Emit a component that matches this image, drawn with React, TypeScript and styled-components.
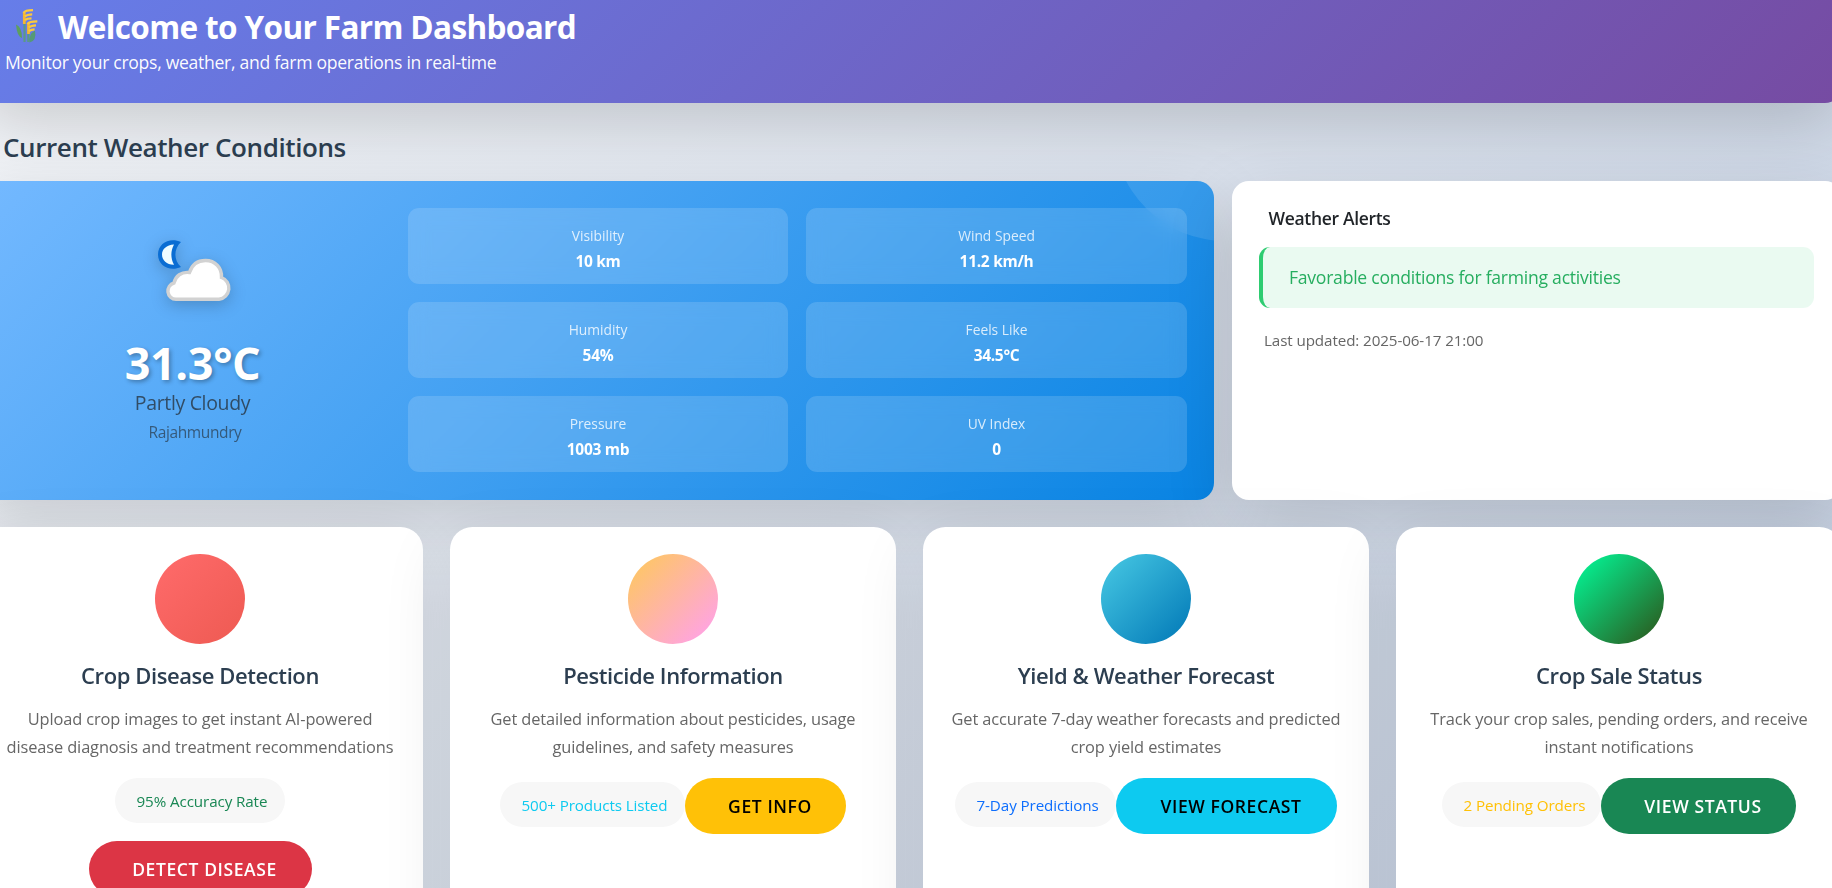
import React from 'react';
import styled, { createGlobalStyle } from 'styled-components';

const Global = createGlobalStyle`
  *{box-sizing:border-box;margin:0;padding:0}
  html,body{margin:0;height:888px;overflow:hidden}
  body{font-family:"Open Sans","Noto Sans",sans-serif;font-size:18px;background:linear-gradient(135deg,#f5f7fa 0%,#c3cfe2 100%)}
`;
const Page = styled.div`width:1832px;height:888px;overflow:hidden;`;
const Shell = styled.div`width:1865px;margin-left:-23px;display:flex;flex-direction:column;`;
const Header = styled.header`
  height:103px;padding:6px 28px 0;color:#fff;border-radius:0 0 17px 17px;
  background:linear-gradient(135deg,#667eea 0%,#764ba2 100%);
  box-shadow:0 22px 67px rgba(0,0,0,.17);
`;
const TitleRow = styled.div`display:flex;align-items:center;height:40px;svg{margin:0 20px 0 11px;flex:none}`;
const Title = styled.h1`font-size:31.5px;font-weight:700;line-height:39px;white-space:nowrap;letter-spacing:-.63px;`;
const Subtitle = styled.p`font-size:17.6px;line-height:33px;letter-spacing:-.3px;color:rgba(255,255,255,.97);`;
const SectionTitle = styled.h2`height:78px;padding:24px 26px 0;font-size:26px;font-weight:600;line-height:40px;color:#2c3e50;letter-spacing:-.4px;`;
const WeatherRow = styled.section`display:grid;grid-template-columns:1237px 610px;gap:18px;height:319px;`;
const WeatherCard = styled.article`
  position:relative;overflow:hidden;border-radius:17px;padding:27px;display:grid;grid-template-columns:377px 779px;gap:27px;
  background:linear-gradient(135deg,#74b9ff 0%,#0984e3 100%);color:#fff;
`;
const WeatherShadow = styled.div`border-radius:17px;box-shadow:0 22px 67px rgba(0,0,0,.15);display:grid;`;
const Glow = styled.div`position:absolute;width:225px;height:225px;border-radius:50%;right:-124px;top:-165px;background:rgba(255,255,255,.1);`;
const Now = styled.div`display:flex;flex-direction:column;align-items:center;padding-top:31px;text-align:center;svg{margin-left:3px;filter:drop-shadow(0 4px 8px rgba(0,0,0,.2))}`;
const Temp = styled.div`margin-top:33px;font-size:45px;line-height:54px;font-weight:700;letter-spacing:-.4px;text-shadow:2px 2px 4px rgba(0,0,0,.3);`;
const Condition = styled.div`margin-top:1px;font-size:19.5px;line-height:24px;letter-spacing:-.35px;color:#212529;opacity:.7;`;
const Place = styled.div`font-size:15.5px;line-height:24px;letter-spacing:-.38px;color:#212529;opacity:.6;margin:5px 0 0 5px;`;
const Details = styled.div`display:grid;grid-template-columns:380px 381px;grid-auto-rows:76px;gap:18px;`;
const Detail = styled.div`border-radius:11px;background:rgba(255,255,255,.15);backdrop-filter:blur(10px);display:flex;flex-direction:column;align-items:center;padding-top:16px;`;
const DetailLabel = styled.span`font-size:13.8px;line-height:24px;opacity:.8;`;
const DetailValue = styled.strong`font-size:15.5px;line-height:26px;font-weight:700;letter-spacing:-.3px;`;
const Alerts = styled.article`position:relative;background:#fff;border-radius:17px;padding:27px 28px 27px 27px;box-shadow:0 22px 67px rgba(0,0,0,.15);`;
const AlertsTitle = styled.h3`font-size:17.5px;font-weight:600;line-height:21px;letter-spacing:-.32px;color:#212529;padding-left:9.5px;`;
const Alert = styled.div`margin-top:18px;height:61px;border-left:4.5px solid #2ecc71;border-radius:11px;background:rgba(46,204,113,.1);color:#27ae60;padding-left:26px;font-size:17.6px;letter-spacing:-.26px;line-height:61px;`;
const Updated = styled.p`font-size:15.2px;line-height:24px;letter-spacing:-.1px;color:#666;margin:20px 0 0 5px;`;
const Features = styled.section`position:relative;display:grid;grid-template-columns:repeat(4,446px);gap:27px;margin-top:27px;`;
const Feature = styled.article`height:440px;background:#fff;border-radius:22.5px;padding:27px 20px;text-align:center;box-shadow:0 22px 67px rgba(0,0,0,.13);`;
const Disc = styled.div<{ $from: string; $to: string }>`width:90px;height:90px;border-radius:50%;margin:0 auto;background:linear-gradient(135deg,${p => p.$from},${p => p.$to});`;
const FeatureTitle = styled.h3`margin-top:16px;font-size:22px;line-height:30px;font-weight:600;letter-spacing:-.42px;color:#2c3e50;`;
const FeatureText = styled.p`margin-top:15px;font-size:16.4px;line-height:28px;letter-spacing:-.12px;color:#666;white-space:pre-line;`;
const Actions = styled.div<{ $stack?: boolean }>`margin-top:17px;display:flex;justify-content:center;align-items:${p => p.$stack ? 'center' : 'flex-start'};flex-direction:${p => p.$stack ? 'column' : 'row'};gap:${p => p.$stack ? '18px' : '0'};`;
const Pill = styled.span<{ $color: string; $w: number; $drop?: boolean }>`width:${p => p.$w}px;height:45px;border-radius:23px;background:#f7f7f7;color:${p => p.$color};font-size:15.2px;letter-spacing:-.1px;line-height:47px;text-align:left;padding-left:21.5px;margin-top:${p => p.$drop ? '4px' : '0'};white-space:nowrap;`;
const Button = styled.button<{ $bg: string; $fg: string; $w: number }>`width:${p => p.$w}px;height:56px;border:0;border-radius:28px;background:${p => p.$bg};color:${p => p.$fg};font:600 17.5px "Open Sans","Noto Sans",sans-serif;letter-spacing:.6px;white-space:nowrap;padding:0 0 1px 9px;`;

const Wheat = () => (
  <svg width="22" height="34" viewBox="0 0 22 34" fill="none">
    <path d="M8.5 33V13M12.3 33V22" stroke="#5b9a86" strokeWidth="2.2" />
    <path d="M0 15.5Q6 18 6 29Q1 27.5 0 15.5Z" fill="#5d9f5f" />
    <path d="M19 21.5Q21 32 13.5 33.5Q12.5 25 19 21.5Z" fill="#559a76" />
    <path d="M8.3 15V3.5M12.5 25V14" stroke="#f6b632" strokeWidth="2.8" />
    <path d="M7.5 4Q9 1.2 17 1.2M9 7.6Q11 5.4 16.2 5.4M9 11Q11 9.4 15.5 9.4" stroke="#fcc93d" strokeWidth="2.3" />
    <path d="M11.5 15Q13 12.4 21.3 12.4M13 18.6Q15 16.4 20 16.4M13 22.2Q15 20.4 18.6 20.4" stroke="#fcc93d" strokeWidth="2.3" />
  </svg>
);
const CloudyNight = () => (
  <svg width="74" height="64" viewBox="0 0 74 64">
    <path d="M24 3C13-2 1 4 1 15.5C1 27 13 33 24 28C16.5 21 16.5 10 24 3Z" fill="#0a6dd3" />
    <path d="M17 5.5C9.500 6 5 10 5 15.5C5 21.5 10 26 17 25.8C13.5 19 13.5 12 17 5.5Z" fill="#effcff" />
    <path d="M19 60.3A8.3 8.3 0 0 1 17 44C18.5 37 24.5 32.5 32.5 33.5C35 25.5 41 21.5 48.500 21.5C58 21.5 65 28.5 64.500 38.5A11.300 11.300 0 0 1 62 60.3Z" fill="#fff" stroke="#d2d2d2" strokeWidth="3.4" />
  </svg>
);

const details = [['Visibility', '10 km'], ['Wind Speed', '11.2 km/h'], ['Humidity', '54%'], ['Feels Like', '34.5°C'], ['Pressure', '1003 mb'], ['UV Index', '0']];
const features = [
  { title: 'Crop Disease Detection', text: 'Upload crop images to get instant AI-powered\ndisease diagnosis and treatment recommendations', from: '#ff6b6b', to: '#ee5a52', pill: '95% Accuracy Rate', pillColor: '#198754', pw: 170, cta: 'DETECT DISEASE', bg: '#dc3545', fg: '#fff', bw: 223, stack: true },
  { title: 'Pesticide Information', text: 'Get detailed information about pesticides, usage\nguidelines, and safety measures', from: '#feca57', to: '#ff9ff3', pill: '500+ Products Listed', pillColor: '#0dcaf0', pw: 185, cta: 'GET INFO', bg: '#ffc107', fg: '#000', bw: 161 },
  { title: 'Yield & Weather Forecast', text: 'Get accurate 7-day weather forecasts and predicted\ncrop yield estimates', from: '#48cae4', to: '#0077b6', pill: '7-Day Predictions', pillColor: '#0d6efd', pw: 161, cta: 'VIEW FORECAST', bg: '#0dcaf0', fg: '#000', bw: 221 },
  { title: 'Crop Sale Status', text: 'Track your crop sales, pending orders, and receive\ninstant notifications', from: '#00ff9d', to: '#2d5016', pill: '2 Pending Orders', pillColor: '#ffc107', pw: 159, cta: 'VIEW STATUS', bg: '#198754', fg: '#fff', bw: 195 },
];

export default function App() {
  return (
    <Page>
      <Global />
      <Shell>
        <Header>
          <TitleRow><Wheat /><Title>Welcome to Your Farm Dashboard</Title></TitleRow>
          <Subtitle>Monitor your crops, weather, and farm operations in real-time</Subtitle>
        </Header>
        <SectionTitle>Current Weather Conditions</SectionTitle>
        <WeatherRow>
          <WeatherShadow>
            <WeatherCard>
              <Glow />
              <Now>
                <CloudyNight />
                <Temp>31.3°C</Temp>
                <Condition>Partly Cloudy</Condition>
                <Place>Rajahmundry</Place>
              </Now>
              <Details>
                {details.map(([k, v]) => <Detail key={k}><DetailLabel>{k}</DetailLabel><DetailValue>{v}</DetailValue></Detail>)}
              </Details>
            </WeatherCard>
          </WeatherShadow>
          <Alerts>
            <AlertsTitle>Weather Alerts</AlertsTitle>
            <Alert>Favorable conditions for farming activities</Alert>
            <Updated>Last updated: 2025-06-17 21:00</Updated>
          </Alerts>
        </WeatherRow>
        <Features>
          {features.map(f => (
            <Feature key={f.title}>
              <Disc $from={f.from} $to={f.to} />
              <FeatureTitle>{f.title}</FeatureTitle>
              <FeatureText>{f.text}</FeatureText>
              <Actions $stack={f.stack}>
                <Pill $color={f.pillColor} $w={f.pw} $drop={!f.stack}>{f.pill}</Pill>
                <Button $bg={f.bg} $fg={f.fg} $w={f.bw}>{f.cta}</Button>
              </Actions>
            </Feature>
          ))}
        </Features>
      </Shell>
    </Page>
  );
}
